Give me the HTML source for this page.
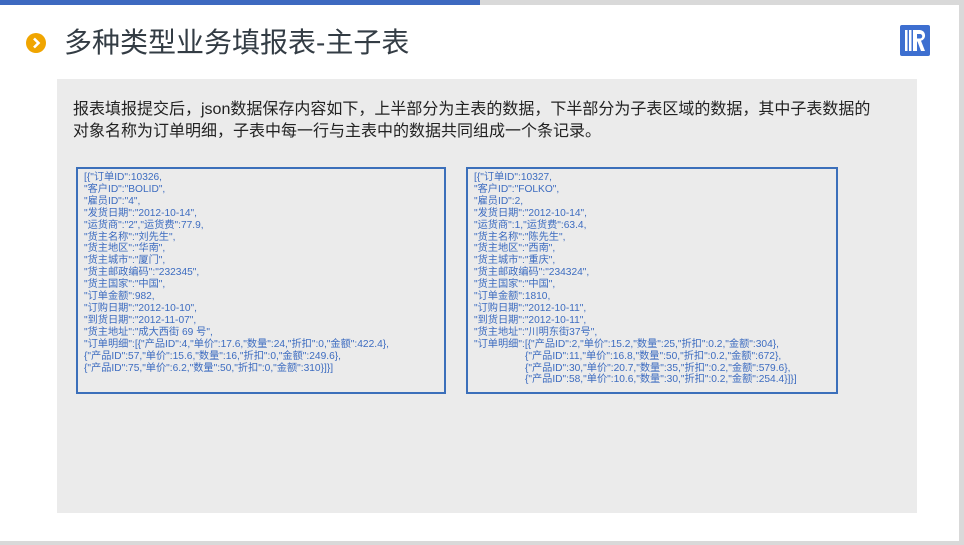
<!DOCTYPE html>
<html><head><meta charset="utf-8"><style>
*{margin:0;padding:0;box-sizing:border-box}
body{width:964px;height:545px;background:#fff;position:relative;overflow:hidden;font-family:"Liberation Sans","Noto Sans CJK SC",sans-serif}
.topg{position:absolute;left:0;top:0;width:964px;height:5px;background:#d9d9d9}
.topb{position:absolute;left:0;top:0;width:480px;height:5px;background:#3d69c0}
.rb{position:absolute;left:959px;top:0;width:5px;height:545px;background:#d9d9d9}
.bb{position:absolute;left:0;top:541px;width:964px;height:4px;background:#d9d9d9}
.dot{position:absolute;left:26px;top:33px;width:20px;height:20px;border-radius:50%;background:#f0a500}
.title{position:absolute;left:64px;top:24px;font-size:28px;color:#333c44;line-height:38px}
.logo{position:absolute;left:900px;top:25px;width:30px;height:31px;background:#3d6fd0;border-radius:2px}
.panel{position:absolute;left:57px;top:79px;width:860px;height:434px;background:#ebebeb}
.intro{position:absolute;left:73px;top:99px;width:812px;font-size:16px;line-height:22px;color:#222}
.box{position:absolute;top:167px;height:227px;border:2px solid #3b6fba;padding:3px 0 0 6px;font-size:10.2px;line-height:11.9px;color:#3d6cc0;white-space:pre}
</style></head><body>
<div class="topg"></div><div class="topb"></div><div class="rb"></div><div class="bb"></div>
<div class="dot"><svg width="20" height="20"><path d="M8 5.5L12.5 10L8 14.5" stroke="#fff" stroke-width="2.6" fill="none"/></svg></div>
<div class="title">多种类型业务填报表-主子表</div>
<div class="logo"><svg width="30" height="31"><rect x="5" y="5" width="2.5" height="21" fill="#fff"/><rect x="9" y="5" width="2.5" height="21" fill="#fff"/><path d="M13 5h7a5.5 5.5 0 0 1 1 10.8L25 26h-4l-3.5-9.5H17V26h-4z M17 9v4.5h3a2.2 2.2 0 0 0 0-4.5z" fill="#fff" fill-rule="evenodd"/></svg></div>
<div class="panel"></div>
<div class="intro">报表填报提交后，json数据保存内容如下，上半部分为主表的数据，下半部分为子表区域的数据，其中子表数据的对象名称为订单明细，子表中每一行与主表中的数据共同组成一个条记录。</div>
<div class="box" style="left:76px;width:370px">[{"订单ID":10326,
"客户ID":"BOLID",
"雇员ID":"4",
"发货日期":"2012-10-14",
"运货商":"2","运货费":77.9,
"货主名称":"刘先生",
"货主地区":"华南",
"货主城市":"厦门",
"货主邮政编码":"232345",
"货主国家":"中国",
"订单金额":982,
"订购日期":"2012-10-10",
"到货日期":"2012-11-07",
"货主地址":"成大西街 69 号",
"订单明细":[{"产品ID":4,"单价":17.6,"数量":24,"折扣":0,"金额":422.4},
{"产品ID":57,"单价":15.6,"数量":16,"折扣":0,"金额":249.6},
{"产品ID":75,"单价":6.2,"数量":50,"折扣":0,"金额":310}]}]</div>
<div class="box" style="left:466px;width:372px">[{"订单ID":10327,
"客户ID":"FOLKO",
"雇员ID":2,
"发货日期":"2012-10-14",
"运货商":1,"运货费":63.4,
"货主名称":"陈先生",
"货主地区":"西南",
"货主城市":"重庆",
"货主邮政编码":"234324",
"货主国家":"中国",
"订单金额":1810,
"订购日期":"2012-10-11",
"到货日期":"2012-10-11",
"货主地址":"川明东街37号",
"订单明细":[{"产品ID":2,"单价":15.2,"数量":25,"折扣":0.2,"金额":304},
                  {"产品ID":11,"单价":16.8,"数量":50,"折扣":0.2,"金额":672},
                  {"产品ID":30,"单价":20.7,"数量":35,"折扣":0.2,"金额":579.6},
                  {"产品ID":58,"单价":10.6,"数量":30,"折扣":0.2,"金额":254.4}]}]</div>
</body></html>
